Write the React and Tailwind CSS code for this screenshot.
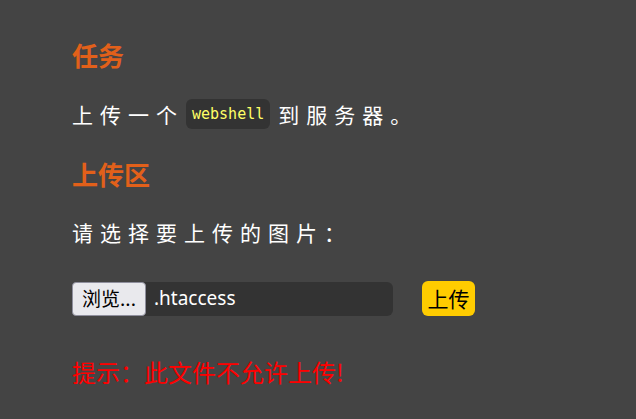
export default function App() {
  const cjk = { fontFamily: '"Noto Sans CJK SC", "Noto Sans", sans-serif' };
  return (
    <div className="w-[636px] h-[419px] bg-[#444444] overflow-hidden" style={cjk}>
      <div className="pl-[72px] pt-[37px]">
        <h2 className="text-[26px] leading-[36px] h-[36px] font-bold text-[#e2601a]">任务</h2>
        <div className="mt-[21px] h-[40px] flex items-center text-[21px] leading-[40px] tracking-[7px] text-white">
          <span>上传一个</span>
          <span
            className="ml-[2px] mr-[8px] px-[6px] h-[30px] flex items-center rounded-md bg-[#333333] text-[#ffff66] text-[15px] leading-[30px] tracking-normal font-normal"
            style={{ fontFamily: '"DejaVu Sans Mono", monospace' }}
          >
            webshell
          </span>
          <span>到服务器。</span>
        </div>
        <h2 className="mt-[22px] text-[26px] leading-[36px] h-[36px] font-bold text-[#e2601a]">上传区</h2>
        <p className="mt-[20px] h-[40px] text-[21px] leading-[40px] tracking-[7px] text-white">请选择要上传的图片：</p>
        <div className="mt-[29px] flex items-center">
          <div className="w-[321px] h-[34px] bg-[#333333] rounded-md flex items-center">
            <div className="h-[34px] w-[74px] bg-[#e9e9ed] border border-[#8f8f9d] rounded-[4px] flex items-center justify-center text-[19px] text-black">
              浏览...
            </div>
            <span className="ml-[8px] text-[19px] text-white" style={{ fontFamily: '"Noto Sans", "Open Sans", sans-serif' }}>.htaccess</span>
          </div>
          <div className="ml-[29px] h-[35px] w-[53px] rounded-md bg-[#ffcc00] flex items-center justify-center text-[21px] text-black">
            上传
          </div>
        </div>
        <p className="mt-[38px] h-[36px] text-[24px] leading-[36px] text-[#ff0000]">提示：此文件不允许上传!</p>
      </div>
    </div>
  );
}
